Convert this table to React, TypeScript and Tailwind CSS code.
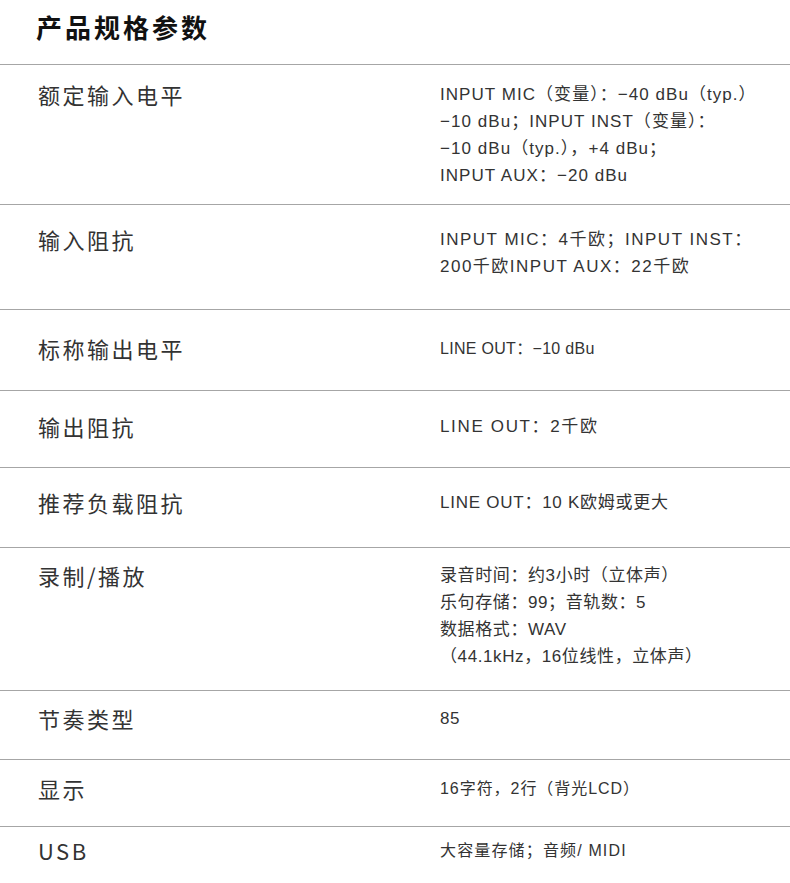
import React from 'react';

type Spec = {
  label: string;
  lines: string[];
  h: string;
  pt: string;
  size: string;
};

const specs: Spec[] = [
  {
    label: '额定输入电平',
    lines: ['INPUT MIC（变量）：−40 dBu（typ.）', '−10 dBu；INPUT INST（变量）：', '−10 dBu（typ.），+4 dBu；', 'INPUT AUX：−20 dBu'],
    h: 'h-[140px]',
    pt: 'pt-[15px]',
    size: 'text-[17px] tracking-[1.05px]',
  },
  {
    label: '输入阻抗',
    lines: ['INPUT MIC：4千欧；INPUT INST：', '200千欧INPUT AUX：22千欧'],
    h: 'h-[105px]',
    pt: 'pt-[20px]',
    size: 'text-[17px] tracking-[1.5px]',
  },
  { label: '标称输出电平', lines: ['LINE OUT：−10 dBu'], h: 'h-[81px]', pt: 'pt-[24px]', size: 'text-[16px] tracking-[0.3px]' },
  { label: '输出阻抗', lines: ['LINE OUT：2千欧'], h: 'h-[77px]', pt: 'pt-[21px]', size: 'text-[17px] tracking-[1.65px]' },
  { label: '推荐负载阻抗', lines: ['LINE OUT：10 K欧姆或更大'], h: 'h-[80px]', pt: 'pt-[20px]', size: 'text-[17px] tracking-[0.75px]' },
  {
    label: '录制/播放',
    lines: ['录音时间：约3小时（立体声）', '乐句存储：99；音轨数：5', '数据格式：WAV', '（44.1kHz，16位线性，立体声）'],
    h: 'h-[143px]',
    pt: 'pt-[13px]',
    size: 'text-[17px] tracking-[0.6px]',
  },
  { label: '节奏类型', lines: ['85'], h: 'h-[69px]', pt: 'pt-[13px]', size: 'text-[17px] tracking-[0.5px]' },
  { label: '显示', lines: ['16字符，2行（背光LCD）'], h: 'h-[67px]', pt: 'pt-[14px]', size: 'text-[16px] tracking-[0.95px]' },
  { label: 'USB', lines: ['大容量存储；音频/ MIDI'], h: 'h-[57px]', pt: 'pt-[9px]', size: 'text-[16px] tracking-[1.15px]' },
];

export default function App() {
  return (
    <div className="w-[790px] h-[883px] overflow-hidden bg-white font-['Noto_Sans_CJK_SC','Noto_Sans',sans-serif]">
      <div className="h-[64px] pl-[36px] pt-[9px]">
        <h1 className="text-[26px] leading-[36px] font-bold tracking-[3px] text-[#111]">产品规格参数</h1>
      </div>

      {specs.map((s) => (
        <div key={s.label} className={`flex items-start border-t border-[#a6a6a6] ${s.h} ${s.pt}`}>
          <div className="w-[440px] shrink-0 pl-[38px] text-[22px] leading-[28px] tracking-[2.5px] text-[#333]">{s.label}</div>
          <div className={`flex-1 mt-[1px] leading-[27px] text-[#333] font-['Liberation_Sans','Noto_Sans_CJK_SC',sans-serif] ${s.size}`}>
            {s.lines.map((l, i) => (
              <p key={i}>{l}</p>
            ))}
          </div>
        </div>
      ))}
    </div>
  );
}
